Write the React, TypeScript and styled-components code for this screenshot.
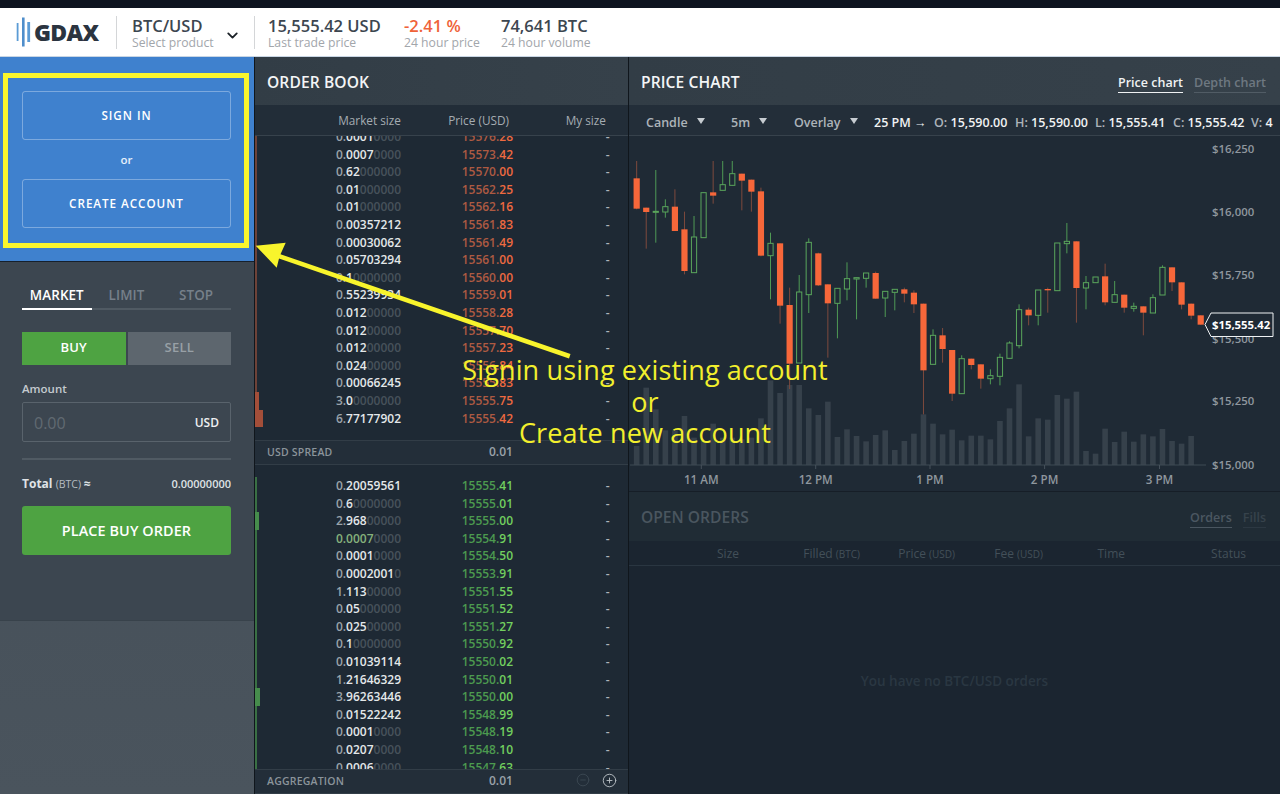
import React from "react";
import styled, { createGlobalStyle } from "styled-components";
import { ChevronDown, CircleMinus, CirclePlus } from "lucide-react";

const Global = createGlobalStyle`
  html, body { margin: 0; padding: 0; background: #1c2731; }
  body { font-family: "Open Sans", "Liberation Sans", sans-serif; overflow: hidden; }
  * { box-sizing: border-box; }
`;

const Page = styled.div`
  position: relative; width: 1280px; height: 794px; overflow: hidden;
  display: flex; flex-direction: column; background: #10161c;
`;
const TopStrip = styled.div`height: 8px; background: #0e1420; flex: none;`;
const Header = styled.header`
  height: 49px; flex: none; background: #fff; display: flex; align-items: center;
  border-bottom: 1px solid #c9d6e4; color: #3a444e;
`;
const Logo = styled.div`width: 116px; padding-left: 16px; display: flex; align-items: center; gap: 2px; height: 100%;`;
const LogoBars = styled.svg`width: 16px; height: 30px; flex: none;`;
const LogoText = styled.span`
  font-family: "Open Sans", sans-serif; font-weight: 800; font-size: 23px; letter-spacing: -0.7px; color: #2b3440; line-height: 1;
`;
const Sep = styled.div`width: 1px; height: 33px; background: #d4d6d8; flex: none;`;
const Product = styled.div`width: 137px; padding: 2px 13px 0 15px; display: flex; align-items: center; justify-content: space-between;`;
const ChevronWrap = styled.span`display: flex; margin-top: 5px; color: #1c2228;`;
const Stat = styled.div<{ $w: number; $pad?: number }>`width: ${p => p.$w}px; padding: 2px 0 0 ${p => p.$pad ?? 0}px; flex: none;`;
const StatMain = styled.div<{ $red?: boolean }>`
  font-size: 16.5px; font-weight: 600; line-height: 19px; color: ${p => (p.$red ? "#ef6238" : "#3c4650")}; white-space: nowrap;
`;
const StatSub = styled.div`font-size: 12.2px; line-height: 15px; color: #a2a6ab; white-space: nowrap;`;

const Main = styled.main`flex: 1; display: flex; min-height: 0;`;
const LeftCol = styled.aside`width: 254px; flex: none; display: flex; flex-direction: column; background: linear-gradient(#414b55, #4a545d);`;
const AuthPanel = styled.section`
  height: 205px; background: #3f81ce; border-bottom: 1px solid #16202c; padding: 34px 23px 0 22px; display: flex; flex-direction: column; align-items: stretch;
`;
const OutlineButton = styled.button`
  height: 49px; background: transparent; border: 1px solid rgba(255,255,255,.32); border-radius: 3px; color: #fff; padding: 0 0 2px;
  font: 600 11.7px "Open Sans", sans-serif; letter-spacing: .95px;
`;
const Or = styled.div`height: 39px; line-height: 39px; text-align: center; color: #e6effb; font-size: 11.5px; font-weight: 600;`;
const TradePanel = styled.section`height: 359px; background: #3c4650; padding: 23px 23px 0 22px; border-bottom: 1px solid #38424b;`;
const Tabs = styled.div`display: grid; grid-template-columns: repeat(3, 1fr); border-bottom: 2px solid #505a63; height: 25px;`;
const Tab = styled.div<{ $on?: boolean }>`
  text-align: center; font-size: 13.4px; font-weight: 600; line-height: 20px; letter-spacing: .1px; height: 25px;
  color: ${p => (p.$on ? "#fff" : "#76808a")}; border-bottom: 2px solid ${p => (p.$on ? "#fff" : "transparent")};
`;
const Sides = styled.div`display: flex; gap: 2px; margin-top: 22px;`;
const Side = styled.div<{ $buy?: boolean }>`
  flex: 1; height: 33px; line-height: 31px; text-align: center; font-size: 13px; font-weight: 600; letter-spacing: .2px;
  background: ${p => (p.$buy ? "#4ea342" : "#5d666e")}; color: ${p => (p.$buy ? "#fff" : "#98a0a6")};
`;
const FieldLabel = styled.div`margin-top: 16px; height: 16px; line-height: 16px; font-size: 11.5px; font-weight: 600; color: #c4cacf;`;
const InputBox = styled.div`
  margin-top: 5px; height: 40px; border: 1px solid #59636c; border-radius: 2px; display: flex; align-items: center; justify-content: space-between; padding: 1px 11px 0 11px;
`;
const Placeholder = styled.span`font-size: 16px; color: #616a72;`;
const Unit = styled.span`font-size: 12px; font-weight: 600; color: #eef0f2; margin-top: -1px;`;
const Rule = styled.div`height: 2px; background: #505a63; margin-top: 16px;`;
const TotalRow = styled.div`display: flex; justify-content: space-between; align-items: center; margin-top: 14px; height: 18px; color: #dfe2e5;`;
const TotalLabel = styled.span`font-size: 12px; font-weight: 700; small { font-size: 10.5px; font-weight: 400; color: #b6bcc1; }`;
const TotalValue = styled.span`font-size: 11px; font-weight: 600;`;
const PlaceBtn = styled.button`
  width: 100%; height: 49px; margin-top: 14px; background: #4ea342; border: 0; border-radius: 3px; color: #fff;
  font: 600 14.4px "Open Sans", sans-serif; letter-spacing: .1px;
`;

const Book = styled.section`width: 375px; flex: none; display: flex; flex-direction: column; background: #1e2934; border-right: 1px solid #10161c; border-left: 1px solid #10161c;`;
const PanelHead = styled.div`
  height: 48px; flex: none; display: flex; align-items: center; justify-content: space-between; padding: 1px 14px 0 12px;
  background: linear-gradient(90deg, #323d46, #36414a);
`;
const PanelTitle = styled.h2`margin: 0; font-size: 15.6px; font-weight: 600; color: #f3f5f6; letter-spacing: .1px;`;
const BookCols = styled.div`
  height: 31px; flex: none; background: #222d38; display: grid; grid-template-columns: 146px 108px 97px; align-items: center;
  border-bottom: 1px solid #37424c; font-size: 11.8px; color: #a5acb2; span { text-align: right; }
`;
const AskList = styled.div`height: 304px; flex: none; overflow: hidden;`;
const AskInner = styled.div`margin-top: -8px;`;
const BidList = styled.div`flex: 1; overflow: hidden; padding-top: 12px; min-height: 0;`;
const Row = styled.div`
  position: relative; height: 17.6px; line-height: 17.6px; display: grid; grid-template-columns: 146px 112px 96.5px;
  font-size: 12px; font-weight: 600; white-space: nowrap;
`;
const Depth = styled.i<{ $ask?: boolean; $w: number }>`
  position: absolute; left: 0; top: 0; bottom: 0; width: ${p => p.$w}px;
  background: ${p => (p.$ask ? (p.$w > 2 ? "#a34e39" : "#6e4238") : (p.$w > 2 ? "#468c4c" : "#3a7044"))};
`;
const Cell = styled.span`text-align: right;`;
const Lead = styled.span<{ $flash?: boolean }>`color: ${p => (p.$flash ? "#86b27c" : "#9aa3aa")};`;
const Sig = styled.span<{ $flash?: boolean }>`color: ${p => (p.$flash ? "#86b27c" : "#e4e8ea")};`;
const Tail = styled.span`color: #47525b;`;
const PriceInt = styled.span<{ $ask?: boolean }>`color: ${p => (p.$ask ? "#ad5a42" : "#4c9a4f")};`;
const PriceDec = styled.span<{ $ask?: boolean }>`color: ${p => (p.$ask ? "#ef6a40" : "#72d05f")};`;
const Dash = styled.span`text-align: right; color: #aeb5ba;`;
const InfoRow = styled.div`
  height: 25px; flex: none; display: grid; grid-template-columns: 222px 1fr; align-items: center; background: #232e39;
  border-top: 1px solid #323d47; border-bottom: 1px solid #323d47; padding: 0 0 2px 12px;
`;
const InfoLabel = styled.span`font-size: 10.5px; font-weight: 600; color: #8b949b; letter-spacing: .2px; white-space: nowrap;`;
const InfoValue = styled.span`font-size: 12px; font-weight: 600; color: #9aa2a9; display: flex; align-items: center; justify-content: space-between;`;
const InfoIcons = styled.span`display: flex; gap: 12px; margin-right: 11px;`;
const RightCol = styled.div`flex: 1; display: flex; flex-direction: column; min-width: 0;`;
const HeadTabs = styled.div`display: flex; gap: 11px; font-size: 12.5px; font-weight: 600; margin-top: 3px;`;
const HeadTab = styled.span<{ $on?: boolean; $dim?: boolean }>`
  padding-bottom: 1px; line-height: 17px; border-bottom: 1.5px solid ${p => (p.$on ? (p.$dim ? "#4a5660" : "#f0f2f3") : (p.$dim ? "#2c3842" : "#515c65"))};
  color: ${p => (p.$on ? (p.$dim ? "#4b5761" : "#f0f2f3") : (p.$dim ? "#37434c" : "#6e7881"))};
`;
const Toolbar = styled.div`
  height: 31px; flex: none; background: #232e39; border-bottom: 1px solid #37424c; display: flex; align-items: center;
  font-size: 12.5px; font-weight: 600; color: #adb4ba; white-space: nowrap; overflow: hidden; padding: 5px 0 0 17px;
`;
const Drop = styled.span<{ $w: number }>`width: ${p => p.$w}px; flex: none; display: flex; align-items: center; gap: 9px;`;
const Tri = styled.span`width: 0; height: 0; border-left: 4.5px solid transparent; border-right: 4.5px solid transparent; border-top: 6px solid #c6ccd1; margin-top: -3px;`;
const Ohlc = styled.span<{ $w: number }>`width: ${p => p.$w}px; flex: none; color: #f0f2f3; em { font-style: normal; color: #adb4ba; }`;
const ChartWrap = styled.div`height: 355px; flex: none; background: #1f2a35;`;
const ChartSvg = styled.svg`display: block; width: 651px; height: 355px;`;
const Orders = styled.section`flex: 1; background: #1b2530; display: flex; flex-direction: column; min-height: 0; border-top: 1px solid #161e27;`;
const OrdersHead = styled.div`
  height: 49px; flex: none; display: flex; align-items: center; justify-content: space-between; padding: 0 14px 0 12px; background: #202c35;
`;
const OrdersTitle = styled.h2`margin: 0; font-size: 15.6px; font-weight: 600; color: #4a565f;`;
const OrdersCols = styled.div`
  height: 25px; flex: none; border-bottom: 1px solid #2a3641; display: grid; grid-template-columns: 110px 121px 95px 88px 82px 121px;
  align-items: center; font-size: 12px; color: #435059; small { font-size: 10px; } span { text-align: right; }
`;
const Empty = styled.div`flex: 1; text-align: center; padding-top: 106px; font-size: 13.5px; font-weight: 600; color: #2a3742;`;

const YellowFrame = styled.div`position: absolute; left: 3px; top: 73px; width: 246px; height: 175px; border: 5px solid #fbf72e;`;
const ArrowSvg = styled.svg`position: absolute; left: 250px; top: 236px; width: 330px; height: 130px;`;
const Note = styled.div`
  position: absolute; left: 445px; top: 354px; width: 400px; text-align: center; color: #f2ef2d;
  font-family: "Open Sans", sans-serif; font-size: 27px; line-height: 31.5px; letter-spacing: .15px;
`;

type Quote = [string, string, string];
const asks: Quote[] = [
  ["0.0001","0000","15576.28"],["0.0007","0000","15573.42"],["0.62","000000","15570.00"],["0.01","000000","15562.25"],
  ["0.01","000000","15562.16"],["0.00357212","","15561.83"],["0.00030062","","15561.49"],["0.05703294","","15561.00"],
  ["0.1","0000000","15560.00"],["0.55239934","","15559.01"],["0.012","00000","15558.28"],["0.012","00000","15557.70"],
  ["0.012","00000","15557.23"],["0.024","00000","15556.84"],["0.00066245","","15555.83"],["3.0","0000000","15555.75"],["6.77177902","","15555.42"],
];
const bids: Quote[] = [
  ["0.20059561","","15555.41"],["0.6","0000000","15555.01"],["2.968","00000","15555.00"],["0.0007","0000","15554.91"],
  ["0.0001","0000","15554.50"],["0.0002001","0","15553.91"],["1.113","00000","15551.55"],["0.05","000000","15551.52"],
  ["0.025","00000","15551.27"],["0.1","0000000","15550.92"],["0.01039114","","15550.02"],["1.21646329","","15550.01"],
  ["3.96263446","","15550.00"],["0.01522242","","15548.99"],["0.0001","0000","15548.19"],["0.0207","0000","15548.10"],["0.0006","0000","15547.63"],
];
const QuoteRow = ({ q, ask }: { q: Quote; ask?: boolean }) => {
  const [sig, tail, price] = q;
  const [i, d] = price.split(".");
  const v = parseFloat(sig);
  const w = v >= 6 ? 8 : v >= 3.5 ? 5 : v >= 2.9 ? 4 : 1.5;
  const flash = price === "15554.91";
  return (
    <Row>
      <Depth $ask={ask} $w={w} />
      <Cell><Lead $flash={flash}>{sig.slice(0, 2)}</Lead><Sig $flash={flash}>{sig.slice(2)}</Sig><Tail>{tail}</Tail></Cell>
      <Cell><PriceInt $ask={ask}>{i}.</PriceInt><PriceDec $ask={ask}>{d}</PriceDec></Cell>
      <Dash>-</Dash>
    </Row>
  );
};

// [up, wickTop, wickBot, bodyTop, bodyBot] in crop pixels
type C = [number, number, number, number, number];
const c1: C[] = [
  [0,30,175,82,173],[0,170,293,170,183],[1,57,275,181,183],[1,145,200,167,183],[0,115,240,167,240],[0,182,370,235,360],
  [1,195,365,258,365],[1,125,260,125,260],[0,30,158,124,134],[1,30,118,101,118],[1,30,103,68,103],[0,68,178,68,89],
  [0,86,182,86,122],[0,110,316,121,314],[1,245,445,277,314],[0,277,518,277,464],[0,410,714,462,638],[1,372,636,423,636],
  [1,262,486,274,431],[0,305,405,307,403],[0,400,620,400,457],[1,412,562,412,457],[1,334,448,383,414],[1,380,505,380,384],
  [1,366,410,366,382],[0,362,443,366,443],[1,420,498,421,441],[1,414,478,415,424],[0,410,454,415,428],[0,418,486,425,460],
  [0,458,790,458,658],
];
const c2: C[] = [
  [1,385,490,403,490],[0,381,485,403,444],[0,447,600,447,578],[1,463,578,473,578],[0,473,505,473,492],[0,490,563,490,533],
  [1,505,550,524,533],[1,458,553,469,526],[1,421,472,426,472],[1,310,442,326,434],[0,320,373,326,343],[1,267,373,267,343],
  [0,260,335,264,268],[1,126,269,126,269],[1,66,157,121,128],[0,121,365,121,261],[1,225,325,245,261],[1,228,245,228,245],
  [0,188,313,226,304],[1,240,304,281,304],[0,281,335,281,320],[1,305,332,316,322],[0,316,403,316,335],[1,280,336,290,336],
  [1,193,282,199,282],[0,199,270,199,244],[0,244,325,244,311],[0,308,355,308,344],[0,343,371,343,371],
];
const candles: C[] = [
  ...c1.map(c => [c[0], 150 + c[1] / 3, 150 + c[2] / 3, 150 + c[3] / 3, 150 + c[4] / 3] as C),
  ...c2.map(c => [c[0], 200 + c[1] / 3, 200 + c[2] / 3, 200 + c[3] / 3, 200 + c[4] / 3] as C),
];
const volTops = [465,290,355,418,418,375,440,450,398,440,440,445,440,382,268,306,282,282,352,372,332,438,415,435,451,432,418,477,450,428,370,398,430,416,448,434,434,445,390,352,280,436,382,386,312,323,302,480,488,413,453,422,452,430,436,414,450,458,435];
const cx = (i: number) => 636.67 + i * 9.56;

const Chart = () => (
  <ChartSvg viewBox="629 135 651 355">
    {volTops.map((t, i) => (
      <rect key={i} x={cx(i) - 2.8} y={290 + t / 3} width={5.6} height={464 - 290 - t / 3} fill="#36414b" />
    ))}
    <line x1={630} x2={1206} y1={464} y2={464} stroke="#3f4a54" strokeWidth={1} />
    {[701.3, 815.7, 930, 1044.6, 1159.5].map((x, i) => (
      <g key={x}>
        <line x1={x} x2={x} y1={464} y2={468} stroke="#46515b" />
        <text x={x} y={483} textAnchor="middle" fontSize={11.6} fontWeight={600} fill="#8f979e" fontFamily="Open Sans">
          {["11 AM", "12 PM", "1 PM", "2 PM", "3 PM"][i]}
        </text>
      </g>
    ))}
    {candles.map((c, i) => {
      const x = cx(i);
      const [up, wt, wb, bt, bb] = c;
      return up ? (
        <g key={i}>
          <line x1={x} x2={x} y1={wt} y2={wb} stroke="#4f9a55" strokeWidth={1} />
          <rect x={x - 2.6} y={bt} width={5.2} height={Math.max(bb - bt, 1)} fill="#1f2a35" stroke="#5aa65c" strokeWidth={1} />
        </g>
      ) : (
        <g key={i}>
          <line x1={x} x2={x} y1={wt} y2={wb} stroke="#7e4a3d" strokeWidth={1} />
          <rect x={x - 3.1} y={bt} width={6.2} height={Math.max(bb - bt, 1)} fill="#f7673a" />
        </g>
      );
    })}
    {[["$16,250", 151.5], ["$16,000", 214.5], ["$15,750", 278], ["$15,500", 341.5], ["$15,250", 404], ["$15,000", 467.5]].map(([t, y]) => (
      <text key={t as string} x={1212} y={y as number} fontSize={11.4} fontWeight={600} fill="#8f979e" fontFamily="Open Sans">{t}</text>
    ))}
    <path d="M1205 323.5 L1211 312 H1273 V335.5 H1211 Z" fill="#1f2a35" stroke="#eef1f3" strokeWidth={1} />
    <text x={1212} y={327.5} fontSize={11.3} fontWeight={700} fill="#fff" fontFamily="Open Sans">$15,555.42</text>
  </ChartSvg>
);

export default function App() {
  return (
    <Page>
      <Global />
      <TopStrip />
      <Header>
        <Logo>
          <LogoBars viewBox="0 0 16 30">
            <rect x="0.7" y="6" width="1.8" height="18" fill="#5b9bd5" />
            <rect x="6" y="0.5" width="2.6" height="29" fill="#4f8ecb" />
            <rect x="11.3" y="5" width="2.8" height="20" fill="#5b9bd5" />
          </LogoBars>
          <LogoText>GDAX</LogoText>
        </Logo>
        <Sep />
        <Product>
          <div>
            <StatMain>BTC/USD</StatMain>
            <StatSub>Select product</StatSub>
          </div>
          <ChevronWrap><ChevronDown size={17} strokeWidth={2.6} /></ChevronWrap>
        </Product>
        <Sep />
        <Stat $w={149} $pad={13}><StatMain>15,555.42 USD</StatMain><StatSub>Last trade price</StatSub></Stat>
        <Stat $w={97}><StatMain $red>-2.41 %</StatMain><StatSub>24 hour price</StatSub></Stat>
        <Stat $w={120}><StatMain>74,641 BTC</StatMain><StatSub>24 hour volume</StatSub></Stat>
      </Header>
      <Main>
        <LeftCol>
          <AuthPanel>
            <OutlineButton>SIGN IN</OutlineButton>
            <Or>or</Or>
            <OutlineButton>CREATE ACCOUNT</OutlineButton>
          </AuthPanel>
          <TradePanel>
            <Tabs><Tab $on>MARKET</Tab><Tab>LIMIT</Tab><Tab>STOP</Tab></Tabs>
            <Sides><Side $buy>BUY</Side><Side>SELL</Side></Sides>
            <FieldLabel>Amount</FieldLabel>
            <InputBox><Placeholder>0.00</Placeholder><Unit>USD</Unit></InputBox>
            <Rule />
            <TotalRow>
              <TotalLabel>Total <small>(BTC)</small> ≈</TotalLabel>
              <TotalValue>0.00000000</TotalValue>
            </TotalRow>
            <PlaceBtn>PLACE BUY ORDER</PlaceBtn>
          </TradePanel>
        </LeftCol>
        <Book>
          <PanelHead><PanelTitle>ORDER BOOK</PanelTitle></PanelHead>
          <BookCols><span>Market size</span><span>Price (USD)</span><span>My size</span></BookCols>
          <AskList><AskInner>{asks.map(q => <QuoteRow key={q[2]} q={q} ask />)}</AskInner></AskList>
          <InfoRow><InfoLabel>USD SPREAD</InfoLabel><InfoValue>0.01</InfoValue></InfoRow>
          <BidList>{bids.map(q => <QuoteRow key={q[2]} q={q} />)}</BidList>
          <InfoRow>
            <InfoLabel>AGGREGATION</InfoLabel>
            <InfoValue>0.01
              <InfoIcons>
                <CircleMinus size={14} color="#3d4954" strokeWidth={1.5} />
                <CirclePlus size={15} color="#b7bec3" strokeWidth={1.5} />
              </InfoIcons>
            </InfoValue>
          </InfoRow>
        </Book>
        <RightCol>
          <PanelHead>
            <PanelTitle>PRICE CHART</PanelTitle>
            <HeadTabs><HeadTab $on>Price chart</HeadTab><HeadTab>Depth chart</HeadTab></HeadTabs>
          </PanelHead>
          <Toolbar>
            <Drop $w={85}>Candle <Tri /></Drop>
            <Drop $w={63}>5m <Tri /></Drop>
            <Drop $w={80}>Overlay <Tri /></Drop>
            <Ohlc $w={60}>25 PM →</Ohlc>
            <Ohlc $w={81}><em>O:</em> 15,590.00</Ohlc>
            <Ohlc $w={80}><em>H:</em> 15,590.00</Ohlc>
            <Ohlc $w={78}><em>L:</em> 15,555.41</Ohlc>
            <Ohlc $w={78}><em>C:</em> 15,555.42</Ohlc>
            <Ohlc $w={30}><em>V:</em> 4</Ohlc>
          </Toolbar>
          <ChartWrap><Chart /></ChartWrap>
          <Orders>
            <OrdersHead>
              <OrdersTitle>OPEN ORDERS</OrdersTitle>
              <HeadTabs><HeadTab $on $dim>Orders</HeadTab><HeadTab $dim>Fills</HeadTab></HeadTabs>
            </OrdersHead>
            <OrdersCols>
              <span>Size</span><span>Filled <small>(BTC)</small></span><span>Price <small>(USD)</small></span><span>Fee <small>(USD)</small></span><span>Time</span><span>Status</span>
            </OrdersCols>
            <Empty>You have no BTC/USD orders</Empty>
          </Orders>
        </RightCol>
      </Main>
      <YellowFrame />
      <ArrowSvg viewBox="250 236 330 130">
        <path d="M255.7 245.7 L285.7 242.7 L280.5 254.3 L570.5 354 L569 358.5 L279 258.5 L276.7 267.7 Z" fill="#f8f42c" />
      </ArrowSvg>
      <Note>Signin using existing account<br />or<br />Create new account</Note>
    </Page>
  );
}
